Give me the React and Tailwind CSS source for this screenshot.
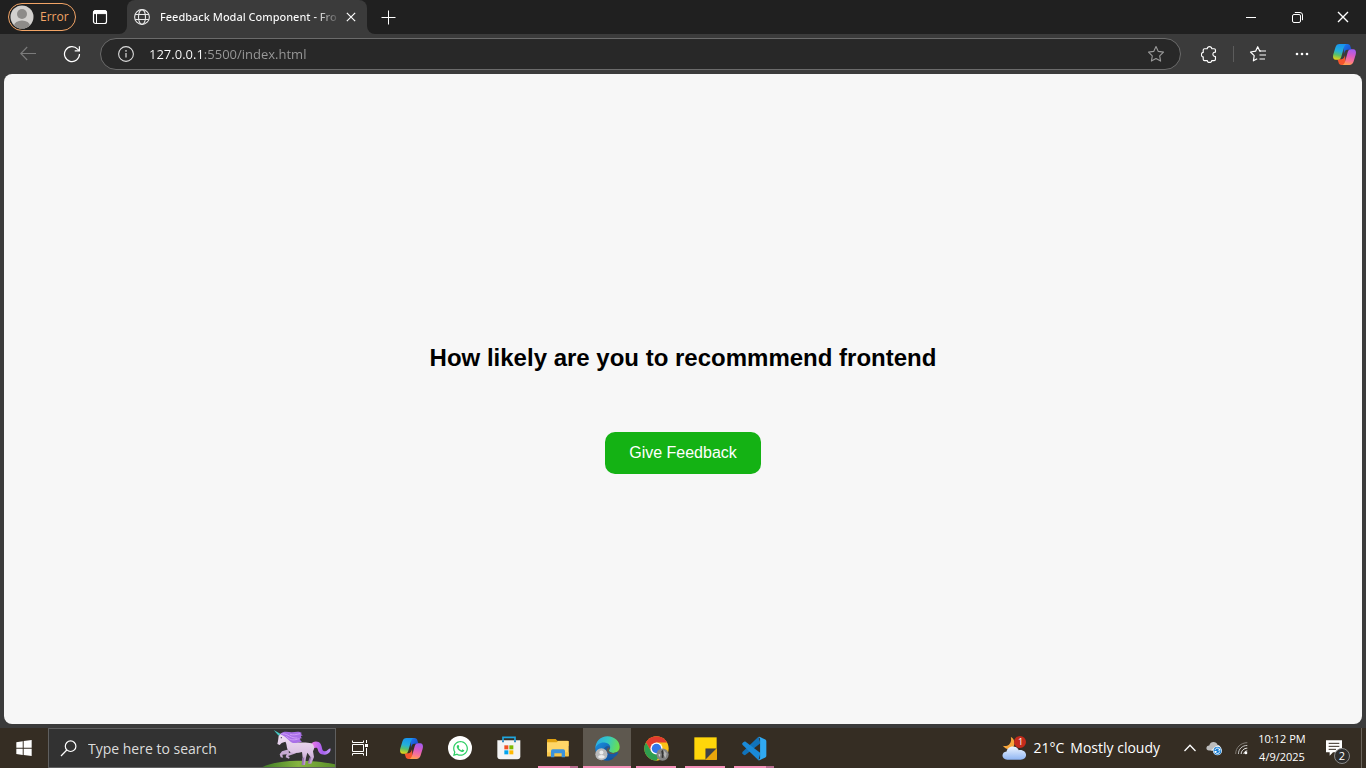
import React from "react";
import { FaWhatsapp } from "react-icons/fa";

const ui = "font-['Open_Sans','Noto_Sans',sans-serif]";

/* ---------- browser icons ---------- */

function Avatar() {
  return (
    <svg viewBox="0 0 24 24" className="size-6 shrink-0" aria-hidden="true">
      <defs>
        <clipPath id="avatarClip"><circle cx="12" cy="12" r="11.5" /></clipPath>
      </defs>
      <g clipPath="url(#avatarClip)">
        <rect width="24" height="24" fill="#d2d0ce" />
        <circle cx="12" cy="9" r="5" fill="#8d8b89" />
        <ellipse cx="12" cy="21" rx="8" ry="5.6" fill="#8d8b89" />
      </g>
    </svg>
  );
}

function TabActionsIcon() {
  return (
    <svg viewBox="0 0 16 16" className="size-4" aria-hidden="true" fill="none" stroke="#fff">
      <rect x="1.5" y="1.5" width="13" height="13" rx="2" strokeWidth="1.2" />
      <path d="M1.5 4V3.5a2 2 0 0 1 2-2h9a2 2 0 0 1 2 2V4.6h-13z" fill="#fff" strokeWidth="1" />
      <path d="M4.5 4v10.5" strokeWidth="1" />
    </svg>
  );
}

function GlobeIcon() {
  return (
    <svg viewBox="0 0 16 16" className="size-4 shrink-0" aria-hidden="true" fill="none" stroke="#e8e8e8" strokeWidth="1.1">
      <circle cx="8" cy="8" r="7.4" />
      <ellipse cx="8" cy="8" rx="3.5" ry="7.4" />
      <path d="M1.2 5.5h13.6M1.2 10.5h13.6" />
    </svg>
  );
}

function CrossIcon({ size }) {
  return (
    <svg viewBox="0 0 12 12" className={size} aria-hidden="true" fill="none" stroke="#fff" strokeWidth="1.4">
      <path d="M1 1l10 10M11 1L1 11" />
    </svg>
  );
}

function PlusIcon() {
  return (
    <svg viewBox="0 0 15 15" className="size-[15px]" aria-hidden="true" stroke="#fff" strokeWidth="1">
      <path d="M7.5 .5v14M.5 7.5h14" />
    </svg>
  );
}

function BackIcon() {
  return (
    <svg viewBox="0 0 16 16" className="size-4" aria-hidden="true" fill="none" stroke="#7b7b7b" strokeWidth="1.1">
      <path d="M16 7.5H.8M7.2 1L.8 7.5l6.4 6.5" />
    </svg>
  );
}

function ReloadIcon() {
  return (
    <svg viewBox="0 0 18 18" className="size-[18px]" aria-hidden="true" fill="none" stroke="#fff" strokeWidth="1.2">
      <path d="M16.5 9A7.5 7.5 0 1 1 14.6 4.1l1.4 1.4" />
      <path d="M16.4 1.2v4.7h-4.7" />
    </svg>
  );
}

function InfoIcon() {
  return (
    <svg viewBox="0 0 16 16" className="size-4 shrink-0" aria-hidden="true" fill="none" stroke="#dcdcdc">
      <circle cx="8" cy="8" r="7.4" strokeWidth="1.1" />
      <path d="M8 7v4.6" strokeWidth="1.2" />
      <circle cx="8" cy="4.9" r=".8" fill="#dcdcdc" stroke="none" />
    </svg>
  );
}

function StarIcon() {
  return (
    <svg viewBox="0 0 18 18" className="size-[18px]" aria-hidden="true" fill="none" stroke="#9a9a9a" strokeWidth="1.1" strokeLinejoin="round">
      <path d="M9 1.6l2.3 4.8 5.2.7-3.8 3.7.9 5.3L9 13.6l-4.6 2.5.9-5.3L1.5 7.1l5.2-.7z" />
    </svg>
  );
}

function PuzzleIcon() {
  return (
    <svg viewBox="215 137 46 50" className="h-[17px] w-4" aria-hidden="true" fill="none" stroke="#fff" strokeWidth="3.4" strokeLinejoin="round">
      <path d="M225 145h8c-1-8 14-8 13 0h7q4 0 4 4v6c-10-1-10 14 0 13v8q0 4-4 4h-7c1 7-14 7-13 0h-8q-4 0-4-4v-7c-7 1-7-14 0-13v-7q0-4 4-4z" />
    </svg>
  );
}

function FavoritesIcon() {
  return (
    <svg viewBox="0 0 18 18" className="size-[18px]" aria-hidden="true" fill="none" stroke="#fff" strokeWidth="1.2" strokeLinejoin="round">
      <path d="M12 6H10.7L8.7 1.700 6.600 6.200 1.500 7l3.700 3.600-.8 5.200 3.800-2" />
      <path d="M10.500 6H17M10.500 10H17M10.500 14H16" />
    </svg>
  );
}

function DotsIcon() {
  return (
    <svg viewBox="0 0 14 4" className="h-1 w-3.5" aria-hidden="true" fill="#fff">
      <circle cx="2" cy="2" r="1.300" />
      <circle cx="7" cy="2" r="1.300" />
      <circle cx="12" cy="2" r="1.300" />
    </svg>
  );
}

function CopilotIcon({ id }) {
  return (
    <svg viewBox="0 0 67 61" className="h-[21px] w-[23px]" aria-hidden="true">
      <defs>
        <linearGradient id={id + "a"} x1=".5" y1="0" x2=".3" y2="1">
          <stop offset="0" stopColor="#1794f0" />
          <stop offset=".45" stopColor="#25b0d8" />
          <stop offset=".7" stopColor="#5ac06a" />
          <stop offset="1" stopColor="#e9d414" />
        </linearGradient>
        <linearGradient id={id + "b"} x1=".6" y1="0" x2=".4" y2="1">
          <stop offset="0" stopColor="#a25cf0" />
          <stop offset=".4" stopColor="#d95bc4" />
          <stop offset=".75" stopColor="#fb7590" />
          <stop offset="1" stopColor="#ffa04d" />
        </linearGradient>
        <linearGradient id={id + "c"} x1="0" y1="0" x2="1" y2="1">
          <stop offset="0" stopColor="#1b7df0" />
          <stop offset="1" stopColor="#1b3ec4" />
        </linearGradient>
      </defs>
      <path d="M30 0h12c5 0 8 3 9 8l3 9H42c-6 0-8 4-10 11z" fill={"url(#" + id + "c)"} />
      <path d="M37 61H25c-5 0-8-3-9-8l-3-9h12c6 0 8-4 10-11z" fill="#f4552d" />
      <path d="M19 0h21c-5 1-7 6-9 13l-7 25c-2 6-5 8-10 8H8C0 46-1 38 1 30L7 10C9 3 13 0 19 0z" fill={"url(#" + id + "a)"} />
      <path d="M48 61H27c5-1 7-6 9-13l7-25c2-6 5-8 10-8h6c8 0 9 8 7 16l-6 20c-2 7-6 10-12 10z" fill={"url(#" + id + "b)"} />
    </svg>
  );
}

/* ---------- browser ---------- */

function IconButton({ label, children }) {
  return (
    <button type="button" aria-label={label} className="flex size-8 shrink-0 items-center justify-center">
      {children}
    </button>
  );
}

function TitleBar() {
  return (
    <header className="flex h-[34px] shrink-0 bg-[#3b3b3b]">
      <div className="flex w-[127px] shrink-0 items-center gap-4 rounded-br-lg bg-[#202020] pl-2">
        <button type="button" className="flex h-7 w-[68px] items-center gap-1.5 rounded-full border border-[#f2a466] pl-px text-xs text-[#f2a466]">
          <Avatar />
          Error
        </button>
        <button type="button" aria-label="Tab actions"><TabActionsIcon /></button>
      </div>
      <div className="w-60 shrink-0 bg-[#202020]">
        <div className="flex h-full items-center rounded-t-lg bg-[#3b3b3b] pr-2 pl-[7px]">
          <GlobeIcon />
          <span className="ml-2.5 bg-[linear-gradient(to_right,#ffffff_88%,#ffffff00_102%)] bg-clip-text font-['Noto_Sans','Open_Sans',sans-serif] text-[11px] font-medium whitespace-nowrap text-transparent">
            Feedback Modal Component - Fro
          </span>
          <button type="button" aria-label="Close tab" className="ml-auto flex size-4 items-center justify-center">
            <CrossIcon size="size-[10px]" />
          </button>
        </div>
      </div>
      <div className="flex min-w-0 flex-1 items-center rounded-bl-lg bg-[#202020] pl-[5px]">
        <IconButton label="New tab"><PlusIcon /></IconButton>
        <div className="ml-auto flex h-full">
          <button type="button" aria-label="Minimize" className="flex w-[46px] items-center justify-center">
            <span className="h-px w-2.5 bg-white" />
          </button>
          <button type="button" aria-label="Restore" className="flex w-[46px] items-center justify-center">
            <svg viewBox="0 0 11 11" className="size-[11px]" aria-hidden="true" fill="none" stroke="#fff" strokeWidth="1">
              <rect x=".5" y="2.500" width="8" height="8" rx="1.500" />
              <path d="M2.800 .5h5.200a2.500 2.500 0 0 1 2.500 2.500v5.200" />
            </svg>
          </button>
          <button type="button" aria-label="Close" className="flex w-[46px] items-center justify-center">
            <CrossIcon size="size-3" />
          </button>
        </div>
      </div>
    </header>
  );
}

function Toolbar() {
  return (
    <nav aria-label="Browser toolbar" className="flex h-10 shrink-0 items-center pr-1.5 pl-3">
      <IconButton label="Back"><BackIcon /></IconButton>
      <div className="ml-3 flex"><IconButton label="Reload"><ReloadIcon /></IconButton></div>
      <div className="ml-3 flex h-8 min-w-0 flex-1 items-center rounded-full border border-[#6b6b6b] bg-[#282828] pr-2 pl-[17px]">
        <InfoIcon />
        <input
          type="text"
          aria-label="Address"
          defaultValue="127.0.0.1:5500/index.html"
          className="ml-[15px] min-w-0 flex-1 bg-[linear-gradient(to_right,#ffffff_54px,#9a9a9a_54px)] bg-clip-text pt-0.5 text-[13px] text-transparent outline-none"
        />
        <IconButton label="Add to favorites"><StarIcon /></IconButton>
      </div>
      <div className="ml-3 flex"><IconButton label="Extensions"><PuzzleIcon /></IconButton></div>
      <span className="mx-2 h-4 w-px bg-[#5c5c5c]" />
      <IconButton label="Favorites"><FavoritesIcon /></IconButton>
      <div className="ml-3 flex"><IconButton label="Settings and more"><DotsIcon /></IconButton></div>
      <div className="ml-2.5 flex"><IconButton label="Copilot"><CopilotIcon id="top" /></IconButton></div>
    </nav>
  );
}

function Page() {
  return (
    <main className="mx-1 mb-1 flex flex-1 flex-col items-center justify-center gap-[60px] rounded-lg bg-[#f7f7f7] pt-5 font-['Liberation_Sans',Arial,sans-serif]">
      <h2 className="text-2xl leading-7 font-bold text-black">How likely are you to recommmend frontend</h2>
      <button type="button" className="rounded-[10px] bg-[#14b214] px-6 py-3 text-base leading-[18px] text-white">
        Give Feedback
      </button>
    </main>
  );
}

/* ---------- taskbar icons ---------- */

function WindowsLogo() {
  return (
    <svg viewBox="47 59 50 50" className="size-4" aria-hidden="true" fill="#fff">
      <path d="M48 66l20-3v20H48zM71 62.500L96 59v24H71zM48 86h20v20l-20-3zM71 86h25v23l-25-3.500z" />
    </svg>
  );
}

function SearchGlyph() {
  return (
    <svg viewBox="0 0 17 17" className="size-[17px] shrink-0" aria-hidden="true" fill="none" stroke="#fff" strokeWidth="1.200">
      <circle cx="10.600" cy="6.200" r="5.300" />
      <path d="M6.800 10L1 16" />
    </svg>
  );
}

function Unicorn() {
  return (
    <svg viewBox="180 27 225 114" className="h-[38px] w-[75px] shrink-0" aria-hidden="true">
      <defs>
        <linearGradient id="hill" x1="0" x2="1">
          <stop offset="0" stopColor="#3c7a25" />
          <stop offset=".5" stopColor="#86b440" />
          <stop offset="1" stopColor="#5a8f2a" />
        </linearGradient>
        <linearGradient id="coat" x1="0" y1="0" x2="0" y2="1">
          <stop offset="0" stopColor="#f1e2f4" />
          <stop offset=".6" stopColor="#dcc3e4" />
          <stop offset="1" stopColor="#b590c6" />
        </linearGradient>
        <linearGradient id="tail" x1="0" x2="1">
          <stop offset="0" stopColor="#f27ae6" />
          <stop offset=".6" stopColor="#a45ff0" />
          <stop offset="1" stopColor="#c79bf8" />
        </linearGradient>
      </defs>
      <path d="M184 143c18-11 62-21 106-21 42 0 84 4 117 11v10z" fill="url(#hill)" />
      <path d="M221 30l15 17 6-5z" fill="#46c8c4" />
      <path d="M333 74c4-11 22-13 29-2 5 9 3 21 12 22 8 0 10-7 17-9 3 9-5 19-17 19-15 0-19-8-21-17-2-7-8-3-14-1z" fill="url(#tail)" />
      <path d="M266 88l-20 6-7 9 3 9 7 1-2-9 20-2zM278 93l-19 11-2 8 10 4 2-4-5-4 24-8z" fill="#c8abd4" />
      <path d="M236 48l8-9 7 4c11 6 21 17 31 23 16 3 40-1 52 4 10 5 10 17 5 24l3 17-8 20h-9l7-19-10-14-4 15-3 22h-9l2-22-2-17c-15 5-31 4-39-3-9-8-5-20-11-28l-11 4-6 6-7-3 2-9z" fill="url(#coat)" />
      <path d="M313 112l-3 23h-5l2-20zM334 112l-6 18h-5l6-18z" fill="#9673ad" />
      <path d="M241 43c8-11 22-7 34-6 10 0 20-5 31 2-5 1-4 5 4 8-8-1-10 3-3 8-9-2-8 5-1 11-11-2-14 5-27 3-10-2-16-17-38-26z" fill="#a970e8" />
      <path d="M247 41c18 0 25 15 45 13M259 49c14 15 25 11 39 7M270 43c10 3 17 1 30-2" fill="none" stroke="#d6a5fa" strokeWidth="2.500" />
      <circle cx="244" cy="53" r="2" fill="#4a315c" />
    </svg>
  );
}

function TaskViewIcon() {
  return (
    <svg viewBox="0 0 17 16" className="h-4 w-[17px]" aria-hidden="true" fill="none" stroke="#fff" strokeWidth="1">
      <path d="M.5 .5v2h11v-2M.5 15.500v-2h11v2M.5 4.500h11v7H.5zM14.500 0v3M14.500 8v8" />
      <rect x="13" y="4" width="3" height="3" fill="#fff" stroke="none" />
    </svg>
  );
}

function WhatsAppIcon() {
  return (
    <span className="flex size-6 items-center justify-center rounded-full bg-white">
      <FaWhatsapp className="size-[17px] text-[#2fcf66]" aria-hidden="true" />
    </span>
  );
}

function StoreIcon() {
  return (
    <svg viewBox="320 50 72 72" className="size-6" aria-hidden="true">
      <path d="M338 68V54h36v14" fill="none" stroke="#1fa6df" strokeWidth="5" />
      <path d="M321 63h69v48q0 9-9 9h-51q-9 0-9-9z" fill="#f3f3f3" />
      <path d="M338 63v6M374 63v6" stroke="#0f79b8" strokeWidth="5" />
      <path d="M342 78h12v12h-12z" fill="#f25022" />
      <path d="M357 78h12v12h-12z" fill="#7fba00" />
      <path d="M342 93h12v12h-12z" fill="#00a4ef" />
      <path d="M357 93h12v12h-12z" fill="#ffb900" />
    </svg>
  );
}

function ExplorerIcon() {
  return (
    <svg viewBox="468 50 72 66" className="h-[22px] w-6" aria-hidden="true">
      <path d="M471 59q0-3 3-3h23l5 5h30q4 0 4 4v12h-65z" fill="#dfa00f" />
      <path d="M471 66h29l4-4h32v46h-65z" fill="#ffd667" />
      <path d="M471 96h65v12h-65z" fill="#f7c64b" />
      <path d="M483 111V92q0-5 5-5h32q5 0 5 5v19h-10V99h-22v12z" fill="#3b93dd" />
    </svg>
  );
}

function EdgeIcon() {
  return (
    <svg viewBox="44 47 74 74" className="size-[25px]" aria-hidden="true">
      <defs>
        <linearGradient id="edgeTop" x1="0" y1=".2" x2="1" y2=".4">
          <stop offset="0" stopColor="#2aa9e6" />
          <stop offset=".5" stopColor="#34c8c5" />
          <stop offset="1" stopColor="#6be04e" />
        </linearGradient>
        <linearGradient id="edgeLow" x1="0" y1="0" x2="1" y2="1">
          <stop offset="0" stopColor="#1b8fe0" />
          <stop offset="1" stopColor="#0c4b97" />
        </linearGradient>
      </defs>
      <path d="M45 84c0-20 15-36 36-36 21 0 36 15 36 31 0 12-9 18-19 18-9 0-15-3-13-8 7-8 1-18-10-18-14 0-27 6-30 13z" fill="url(#edgeTop)" />
      <path d="M45 84c2-11 14-19 27-18 10 1 17 7 17 14-10-6-20 1-19 12 1 13 14 23 32 17-5 7-13 11-22 11-20 0-35-15-35-36z" fill="url(#edgeLow)" />
      <path d="M70 92c0-12 10-18 18-13 3 6-3 8-3 11 1 7 14 9 24 5 3-1 5 1 3 4-6 11-18 15-27 12-9-3-15-11-15-19z" fill="#1659a6" />
      <path d="M87 80c2 5-3 7-2 11 3 7 15 8 24 4-8 8-23 7-29 0-4-6-1-14 7-15z" fill="#5e584f" />
      <circle cx="63" cy="101" r="18" fill="#b9babb" />
      <circle cx="63" cy="96" r="6" fill="#ececec" />
      <path d="M53 110c1-9 19-9 20 0q-10 7-20 0z" fill="#ececec" />
    </svg>
  );
}

function ChromeIcon() {
  return (
    <svg viewBox="191 47 74 74" className="size-[25px]" aria-hidden="true">
      <circle cx="228" cy="84" r="36" fill="#fbc116" />
      <path d="M196.800 66A36 36 0 0 1 259.200 66H228l-16 27z" fill="#e33b2e" />
      <path d="M196.800 66A36 36 0 0 0 228 120l15.600-27L228 84l-15.600 9z" fill="#2f9e4f" />
      <circle cx="228" cy="84" r="18" fill="#fff" />
      <circle cx="228" cy="84" r="14" fill="#3476e8" />
      <circle cx="246" cy="102" r="18" fill="#858585" />
      <path d="M242 92l4-4 4 10-2 15-5-2 1-9z" fill="#353535" />
      <path d="M250 90l8 9-3 13-6-9z" fill="#b5b5b5" />
      <path d="M233 102l6-2-1 10z" fill="#d0d0d0" />
    </svg>
  );
}

function NotesIcon() {
  return (
    <svg viewBox="341 50 68 68" className="size-[23px]" aria-hidden="true">
      <path d="M342 51h66v66h-66z" fill="#ffd60a" />
      <path d="M375 84h33v33h-33z" fill="#f4b400" />
      <path d="M375 84h33l-33 33z" fill="#3e4147" />
      <path d="M408 84v33h-33z" fill="#e9a50c" />
    </svg>
  );
}

function CodeIcon() {
  return (
    <svg viewBox="484 47 76 74" className="size-[25px]" aria-hidden="true">
      <path d="M486 94l48-46 6 20-46 36q-3 1-5-1l-4-4q-1-3 1-5z" fill="#1173bb" />
      <path d="M486 73l48 47 6-22-46-35q-3-1-5 1l-4 4q-1 3 1 5z" fill="#1a8ad8" />
      <path d="M532 50q3-3 7-1l16 8q3 2 3 5v44q0 3-3 5l-16 8q-4 2-7-1 6 1 7-5V55q-1-6-7-5z" fill="#30a9f2" />
    </svg>
  );
}

function WeatherIcon() {
  return (
    <svg viewBox="34 46 76 74" className="size-[25px]" aria-hidden="true">
      <defs>
        <linearGradient id="cloud" x1="0" y1="0" x2="0" y2="1">
          <stop offset="0" stopColor="#eef5ff" />
          <stop offset="1" stopColor="#8fb5f3" />
        </linearGradient>
      </defs>
      <path d="M61 48c11 6 14 19 8 30-6 9-20 12-33-3 17 4 29-8 25-27z" fill="#f7a63b" />
      <path d="M50 117c-19 0-19-24-2-25 3-18 31-20 37-4 27-3 30 29 5 29z" fill="url(#cloud)" />
    </svg>
  );
}

function CloudSyncIcon() {
  return (
    <svg viewBox="104 66 52 44" className="h-[15px] w-[17px]" aria-hidden="true">
      <path d="M113 94c-11 0-10-15 1-15 3-14 22-14 26-1 10 0 12 16 1 16z" fill="#bdbdbd" />
      <path d="M118 94l22-16c12 1 11 16 0 16z" fill="#ededed" />
      <circle cx="139" cy="95" r="14" fill="#fff" />
      <circle cx="139" cy="95" r="12" fill="#1c80d4" />
      <path d="M132 93c1-8 12-8 14-1M146 97c-1 8-12 8-14 1" fill="none" stroke="#fff" strokeWidth="3" />
      <path d="M148 86v8h-8zM130 104v-8h8z" fill="#fff" />
    </svg>
  );
}

function WifiIcon() {
  return (
    <svg viewBox="186 70 38 38" className="size-[13px]" aria-hidden="true" fill="none" strokeWidth="2.600">
      <path d="M188 105C188 86 203 72 222 72" stroke="#8a857e" />
      <path d="M196 105c0-14 11-25 26-25" stroke="#d8d8d8" />
      <path d="M204 105c0-9 8-17 18-17" stroke="#fff" />
      <path d="M212 105c0-5 4-9 10-9" stroke="#fff" />
      <circle cx="218" cy="102" r="4" fill="#fff" stroke="none" />
    </svg>
  );
}

/* ---------- taskbar ---------- */

const apps = [
  { name: "Copilot", icon: <CopilotIcon id="task" /> },
  { name: "WhatsApp", icon: <WhatsAppIcon /> },
  { name: "Microsoft Store", icon: <StoreIcon /> },
  { name: "File Explorer", icon: <ExplorerIcon />, state: "stacked" },
  { name: "Microsoft Edge", icon: <EdgeIcon />, state: "active" },
  { name: "Google Chrome", icon: <ChromeIcon />, state: "open" },
  { name: "Sticky Notes", icon: <NotesIcon />, state: "open" },
  { name: "Visual Studio Code", icon: <CodeIcon />, state: "stacked" },
];

function AppButton({ name, icon, state }) {
  const active = state === "active";
  return (
    <button type="button" aria-label={name} className={"flex h-full w-12 flex-col items-center " + (active ? "bg-[#5e584f]" : "")}>
      <span className="flex flex-1 items-center justify-center">{icon}</span>
      {state && (
        <span className={"-mt-0.5 flex h-0.5 " + (active ? "w-full" : "w-10")}>
          <span className="flex-1 bg-[#f48fb8]" />
          {state === "stacked" && <span className="w-2 bg-[#b56a8c]" />}
        </span>
      )}
    </button>
  );
}

function Taskbar() {
  return (
    <footer className="flex h-10 shrink-0 items-center bg-[#352d23] text-white">
      <button type="button" aria-label="Start" className="flex h-full w-12 items-center justify-center"><WindowsLogo /></button>
      <div className="flex h-full w-72 shrink-0 items-center border border-[#5f5f5f] bg-[#323232] pl-[11px]">
        <SearchGlyph />
        <input
          type="search"
          aria-label="Search"
          placeholder="Type here to search"
          className="ml-[11px] min-w-0 flex-1 bg-transparent pt-0.5 text-sm outline-none placeholder:text-[#dcdcdc]"
        />
        <Unicorn />
      </div>
      <button type="button" aria-label="Task view" className="mr-[3px] flex h-full w-12 items-center justify-center"><TaskViewIcon /></button>
      <div className="flex h-full gap-px">
        {apps.map((app) => <AppButton key={app.name} {...app} />)}
      </div>
      <div className="ml-auto flex h-full items-center">
        <button type="button" className="flex items-center text-sm">
          <span className="relative mr-1.5">
            <WeatherIcon />
            <span className="absolute top-0 left-3 flex size-3 items-center justify-center rounded-full bg-[#c42b1c] text-[9px] leading-3">1</span>
          </span>
          <span>21°C</span>
          <span className="ml-1.5">Mostly cloudy</span>
        </button>
        <button type="button" aria-label="Show hidden icons" className="ml-6 flex w-3 justify-center">
          <svg viewBox="0 0 12 8" className="h-2 w-3" aria-hidden="true" fill="none" stroke="#fff" strokeWidth="1.300"><path d="M.5 7L6 1.300 11.500 7" /></svg>
        </button>
        <button type="button" aria-label="OneDrive" className="ml-2.5"><CloudSyncIcon /></button>
        <button type="button" aria-label="Network" className="ml-3"><WifiIcon /></button>
        <button type="button" className="ml-2 flex w-[52px] flex-col items-center text-[11px] leading-[18px] whitespace-nowrap">
          <span>10:12 PM</span>
          <span>4/9/2025</span>
        </button>
        <button type="button" aria-label="Notifications" className="relative ml-[18px] flex h-full w-6 items-center">
          <svg viewBox="465 59 48 48" className="size-4" aria-hidden="true">
            <path d="M465 60h48v36h-27l-10 10V96h-11z" fill="#fff" />
            <path d="M473 69h32M473 78h32M473 87h22" stroke="#352d23" strokeWidth="3" />
          </svg>
          <span className="absolute top-5 left-2 flex size-4 items-center justify-center rounded-full border border-[#8a8a8a] bg-[#2d2d2d] text-[11px] leading-4">2</span>
        </button>
        <span className="mr-1 ml-[11px] h-full w-px bg-[#6a645c]" />
      </div>
    </footer>
  );
}

export default function App() {
  return (
    <div className={"flex min-h-screen flex-col bg-[#3b3b3b] text-white " + ui}>
      <TitleBar />
      <Toolbar />
      <Page />
      <Taskbar />
    </div>
  );
}
